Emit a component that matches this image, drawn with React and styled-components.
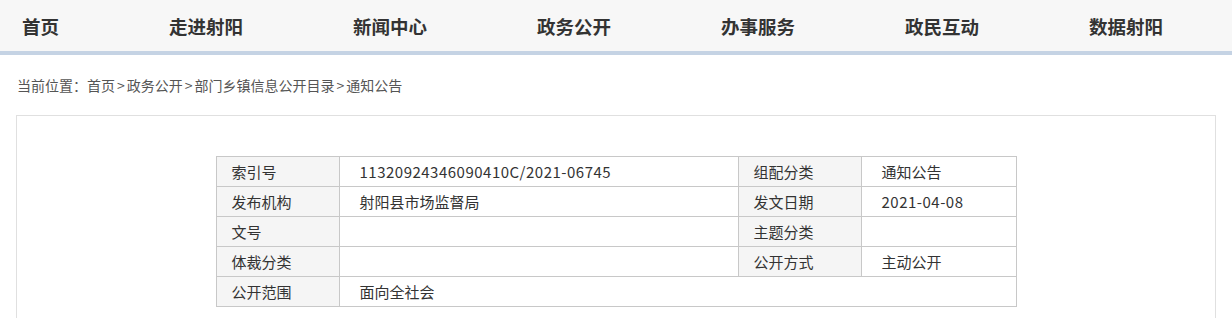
import styled, { createGlobalStyle } from 'styled-components'

const GlobalStyle = createGlobalStyle`
body {
  margin: 0;
  background: #fff;
  font-family: "Noto Sans CJK SC", "Noto Sans", sans-serif;
  color: #333;
}
`

const NavBar = styled.div`
background-color: #f7f7f7;
border-bottom: 4px solid #c5d3e4;
display: flex;
align-items: center;
justify-content: space-between;
padding: 1px 69px 0 22px;
height: 50px;
`

const NavItem = styled.a`
font-size: 18.5px;
font-weight: bold;
color: #333;
text-decoration: none;
white-space: nowrap;
line-height: 1;
`

const Main = styled.div`
width: 1200px;
margin: 0 auto;
`

const Crumbs = styled.div`
margin: 20px 0 20px 1px;
font-size: 14px;
line-height: 20px;
color: #555;
`

const Sep = styled.span`
padding: 0 2px;
`

const Box = styled.div`
border: 1px solid #e0e0e0;
padding: 40px 0 60px;
`

const InfoTable = styled.table`
width: 800px;
margin: 0 auto;
border-collapse: collapse;
table-layout: fixed;
font-size: 15px;
color: #333;
`

const Cell = styled.td`
height: 29px;
padding: 0 0 0 ${p => (p.$label ? 15 : 20)}px;
border: 1px solid #c8c8c8;
background: ${p => (p.$label ? '#f5f5f5' : '#fff')};
white-space: nowrap;
vertical-align: middle;
`

// latin digits run a little wider in the original
const Num = styled.span`
letter-spacing: 0.5px;
`

const isLatin = s => /^[0-9A-Za-z/\-]+$/.test(s)
const Val = ({ text }) => (isLatin(text) ? <Num>{text}</Num> : text)

const rows = [
  ['索引号', '11320924346090410C/2021-06745', '组配分类', '通知公告'],
  ['发布机构', '射阳县市场监督局', '发文日期', '2021-04-08'],
  ['文号', '', '主题分类', ''],
  ['体裁分类', '', '公开方式', '主动公开'],
]

const navs = ['首页', '走进射阳', '新闻中心', '政务公开', '办事服务', '政民互动', '数据射阳']
const crumbs = ['首页', '政务公开', '部门乡镇信息公开目录', '通知公告']

const App = () => (
  <>
    <GlobalStyle />
    <NavBar>
      {navs.map(n => <NavItem key={n}>{n}</NavItem>)}
    </NavBar>
    <Main>
      <Crumbs>
        当前位置：
        {crumbs.map((c, i) => (
          <span key={c}>{i > 0 && <Sep>&gt;</Sep>}{c}</span>
        ))}
      </Crumbs>
      <Box>
        <InfoTable>
          <colgroup>
            <col style={{ width: 123 }} />
            <col style={{ width: 399 }} />
            <col style={{ width: 123 }} />
            <col style={{ width: 155 }} />
          </colgroup>
          <tbody>
            {rows.map(r => (
              <tr key={r[0]}>
                <Cell $label>{r[0]}</Cell>
                <Cell><Val text={r[1]} /></Cell>
                <Cell $label>{r[2]}</Cell>
                <Cell><Val text={r[3]} /></Cell>
              </tr>
            ))}
            <tr>
              <Cell $label>公开范围</Cell>
              <Cell colSpan={3}>面向全社会</Cell>
            </tr>
          </tbody>
        </InfoTable>
      </Box>
    </Main>
  </>
)

export default App
